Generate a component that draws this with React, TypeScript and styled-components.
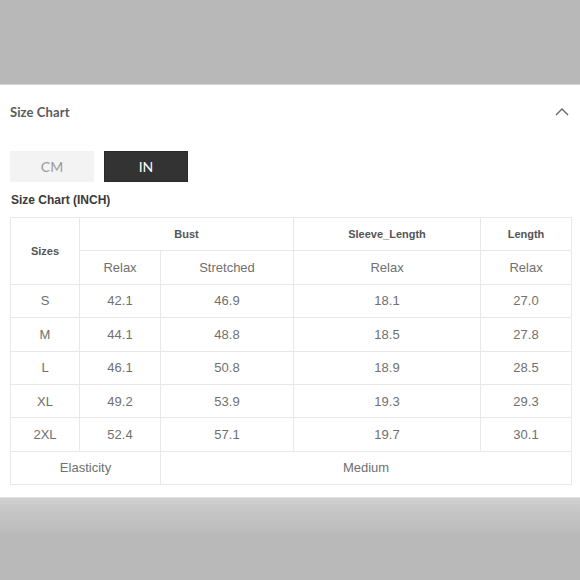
import styled, { createGlobalStyle } from 'styled-components';

const GlobalStyle = createGlobalStyle`
  html, body {
    margin: 0;
    padding: 0;
    background: #b7b8b7;
  }
  #root {
    width: 580px;
    height: 580px;
  }
`;

interface SizeRow {
    size: string;
    bustRelax: string;
    bustStretched: string;
    sleeve: string;
    length: string;
}

const rows: SizeRow[] = [
    { size: 'S', bustRelax: '42.1', bustStretched: '46.9', sleeve: '18.1', length: '27.0' },
    { size: 'M', bustRelax: '44.1', bustStretched: '48.8', sleeve: '18.5', length: '27.8' },
    { size: 'L', bustRelax: '46.1', bustStretched: '50.8', sleeve: '18.9', length: '28.5' },
    { size: 'XL', bustRelax: '49.2', bustStretched: '53.9', sleeve: '19.3', length: '29.3' },
    { size: '2XL', bustRelax: '52.4', bustStretched: '57.1', sleeve: '19.7', length: '30.1' },
];

const Page = styled.div`
    display: flex;
    flex-direction: column;
    height: 580px;
`;

const TopBand = styled.div`
    height: 84px;
    background: #b7b8b7;
    border-bottom: 1px solid #d4d4d4;
`;

const Panel = styled.section`
    height: 412px;
    background: #ffffff;
    display: flex;
    flex-direction: column;
`;

const BottomBand = styled.div`
    flex: 1;
    background: linear-gradient(#d0d0d0 0px, #c4c5c4 14px, #b8b9b8 40px);
    border-top: 1px solid #e2e2e2;
`;

const PanelHeader = styled.div`
    height: 54px;
    display: flex;
    align-items: center;
    justify-content: space-between;
    padding: 0 10px;
`;

const PanelTitle = styled.div`
    font-family: Lato, "Open Sans", sans-serif;
    font-size: 13px;
    font-weight: 700;
    color: #5a5a5a;
    letter-spacing: 0.1px;
`;

const Body = styled.div`
    padding: 12px 9px 0 10px;
    display: flex;
    flex-direction: column;
`;

const UnitTabs = styled.div`
    display: flex;
    gap: 10px;
`;

const UnitButton = styled.div<{ $active?: boolean }>`
    width: 84px;
    height: 31px;
    display: flex;
    align-items: center;
    justify-content: center;
    font-family: Lato, "Open Sans", sans-serif;
    font-size: 14px;
    color: ${p => (p.$active ? '#ffffff' : '#9a9a9a')};
    background: ${p => (p.$active ? '#333333' : '#f3f3f3')};
    border: 1px solid ${p => (p.$active ? '#2a2a2a' : '#f3f3f3')};
    box-sizing: border-box;
`;

const ChartLabel = styled.div`
    margin-top: 11px;
    margin-left: 1px;
    font-family: "Liberation Sans", Arial, sans-serif;
    font-size: 12px;
    font-weight: 700;
    color: #3a3a3a;
    height: 24px;
`;

const Table = styled.table`
    border-collapse: collapse;
    width: 561px;
    table-layout: fixed;
    font-family: "Liberation Sans", Arial, sans-serif;

    tr {
        height: 33.4px;
    }
`;

const Th = styled.th`
    border: 1px solid #e8e8e8;
    font-size: 11px;
    font-weight: 700;
    color: #555;
    text-align: center;
    padding: 0;
`;

const Td = styled.td`
    border: 1px solid #e8e8e8;
    font-size: 13px;
    color: #707070;
    text-align: center;
    padding: 0;
`;

const Chevron = () => (
    <svg width="16" height="10" viewBox="0 0 16 10">
        <path d="M2 8 L8 2 L14 8" fill="none" stroke="#666" strokeWidth="1.4" />
    </svg>
);

const App = () => {
    return (
        <Page>
            <GlobalStyle />
            <TopBand />
            <Panel>
                <PanelHeader>
                    <PanelTitle>Size Chart</PanelTitle>
                    <Chevron />
                </PanelHeader>
                <Body>
                    <UnitTabs>
                        <UnitButton>CM</UnitButton>
                        <UnitButton $active>IN</UnitButton>
                    </UnitTabs>
                    <ChartLabel>Size Chart (INCH)</ChartLabel>
                    <Table>
                        <colgroup>
                            <col style={{ width: '69px' }} />
                            <col style={{ width: '81px' }} />
                            <col style={{ width: '133px' }} />
                            <col style={{ width: '187px' }} />
                            <col style={{ width: '91px' }} />
                        </colgroup>
                        <thead>
                            <tr>
                                <Th rowSpan={2}>Sizes</Th>
                                <Th colSpan={2}>Bust</Th>
                                <Th>Sleeve_Length</Th>
                                <Th>Length</Th>
                            </tr>
                            <tr>
                                <Td>Relax</Td>
                                <Td>Stretched</Td>
                                <Td>Relax</Td>
                                <Td>Relax</Td>
                            </tr>
                        </thead>
                        <tbody>
                            {rows.map(r => (
                                <tr key={r.size}>
                                    <Td>{r.size}</Td>
                                    <Td>{r.bustRelax}</Td>
                                    <Td>{r.bustStretched}</Td>
                                    <Td>{r.sleeve}</Td>
                                    <Td>{r.length}</Td>
                                </tr>
                            ))}
                            <tr>
                                <Td colSpan={2}>Elasticity</Td>
                                <Td colSpan={3}>Medium</Td>
                            </tr>
                        </tbody>
                    </Table>
                </Body>
            </Panel>
            <BottomBand />
        </Page>
    );
};

export default App;
